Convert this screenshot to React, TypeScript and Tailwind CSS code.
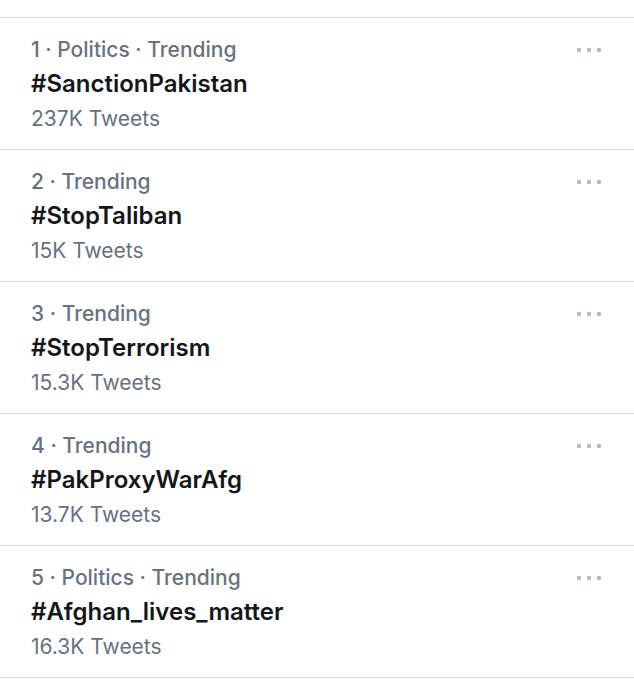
const trends = [
  { meta: "1 · Politics · Trending", tag: "#SanctionPakistan", count: "237K Tweets" },
  { meta: "2 · Trending", tag: "#StopTaliban", count: "15K Tweets" },
  { meta: "3 · Trending", tag: "#StopTerrorism", count: "15.3K Tweets" },
  { meta: "4 · Trending", tag: "#PakProxyWarAfg", count: "13.7K Tweets" },
  { meta: "5 · Politics · Trending", tag: "#Afghan_lives_matter", count: "16.3K Tweets" },
];

const Dots = () => (
  <svg width="26" height="6" viewBox="0 0 26 6" className="mt-[14px]">
    <circle cx="3" cy="3" r="2.2" fill="#b0b9c2" />
    <circle cx="13" cy="3" r="2.2" fill="#b0b9c2" />
    <circle cx="23" cy="3" r="2.2" fill="#b0b9c2" />
  </svg>
);

const App = () => {
  return (
    <div
      className="w-[634px] h-[680px] bg-white pt-[17px]"
      style={{ fontFamily: "Inter, 'Noto Sans', sans-serif" }}
    >
      <div className="border-t border-[#dedede]">
        {trends.map((t) => (
          <div
            key={t.tag}
            className="flex justify-between border-b border-[#dedede] pl-[31px] pr-[32px] pt-[15px] pb-[14px]"
          >
            <div>
              <p className="text-[21px] leading-[33px] font-medium text-[#66727f]">{t.meta}</p>
              <p className="text-[24px] leading-[36px] font-semibold text-[#14171a]">{t.tag}</p>
              <p className="text-[21px] leading-[33px] text-[#66727f]">{t.count}</p>
            </div>
            <Dots />
          </div>
        ))}
      </div>
    </div>
  );
};

export default App;
